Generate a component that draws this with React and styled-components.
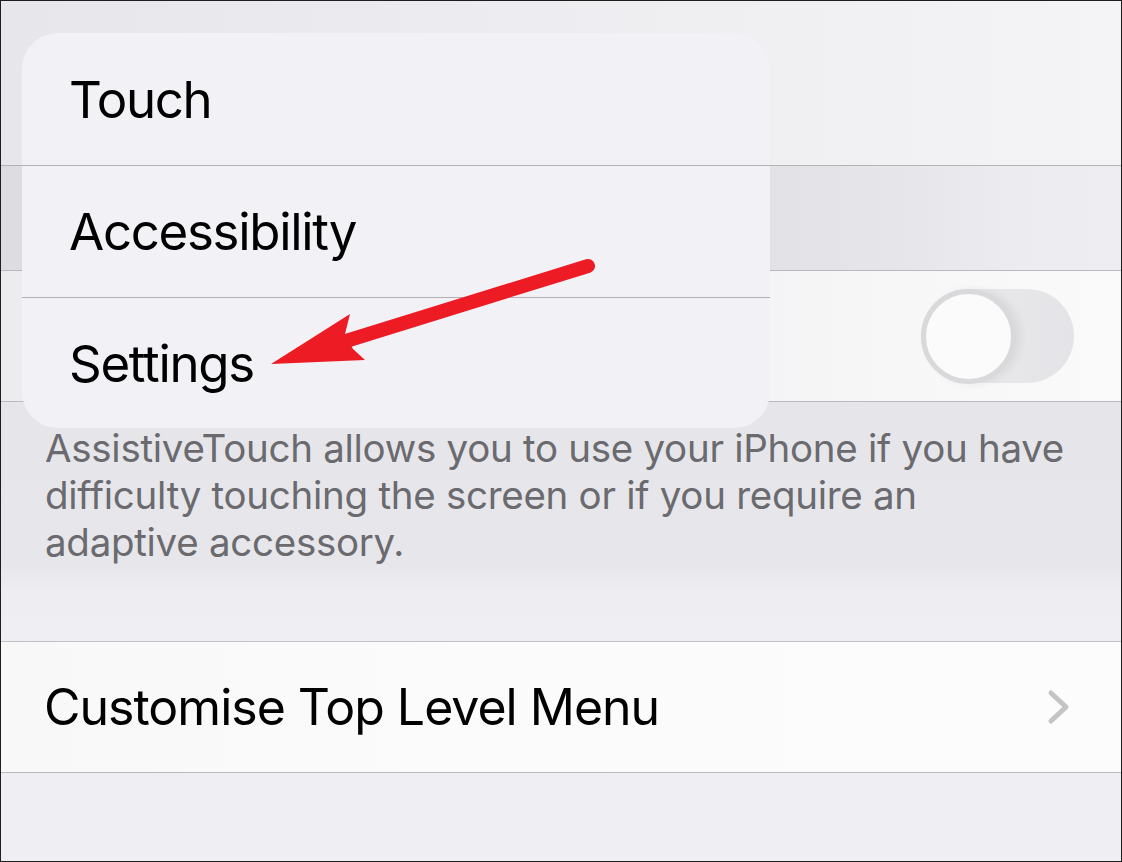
import React from 'react';
import styled, { createGlobalStyle } from 'styled-components';

const GlobalStyle = createGlobalStyle`
  html, body {
    margin: 0;
    padding: 0;
    background: #efeff3;
  }
  * {
    box-sizing: border-box;
  }
`;

const Screen = styled.div`
  position: relative;
  width: 1122px;
  height: 862px;
  overflow: hidden;
  border: 1px solid #1e1e1e;
  background: #efeff3;
  font-family: Inter, "Liberation Sans", Arial, sans-serif;
  display: flex;
  flex-direction: column;
`;

const TopArea = styled.div`
  height: 165px;
  flex-shrink: 0;
  border-bottom: 1px solid #b3b3b8;
  background: linear-gradient(90deg, #e7e7eb 0%, #ececf0 40%, #f0f0f3 70%, #f4f4f6 100%);
`;

const Row = styled.div`
  height: ${p => p.$height}px;
  flex-shrink: 0;
  display: flex;
  align-items: center;
  justify-content: space-between;
  padding: 0 47px 0 43px;
  border-bottom: 1px solid #b9b9be;
  background: ${p => p.$bg};
`;

const RowLabel = styled.span`
  font-size: 50px;
  line-height: 1;
  color: #000;
  letter-spacing: -1px;
`;

const Note = styled.div`
  height: 240px;
  flex-shrink: 0;
  padding: 23px 40px 0 44px;
  border-bottom: 1px solid #c3c3c7;
  background: linear-gradient(180deg, #e6e6ea 0%, #e7e7eb 68%, #eeeef2 80%, #efeff3 100%);
  font-size: 38.5px;
  line-height: 47px;
  color: #6a6a6f;
  letter-spacing: -0.28px;
  white-space: nowrap;
`;

const Bottom = styled.div`
  flex: 1;
  background: #efeff3;
`;

const Track = styled.div`
  width: 153px;
  height: 94px;
  border-radius: 47px;
  background: linear-gradient(90deg, #e9e9ec 0%, #e7e7ea 60%, #e4e4e8 100%);
  display: flex;
  align-items: center;
`;

const Knob = styled.div`
  width: 95px;
  height: 95px;
  border-radius: 50%;
  background: #fbfbfb;
  border: 5px solid #d9d9dc;
  box-shadow: 5px 0 8px rgba(0, 0, 0, 0.06);
`;

const Chevron = styled.svg`
  width: 24px;
  height: 36px;
  margin-right: 3px;
`;

const Menu = styled.div`
  position: absolute;
  left: 21px;
  top: 32px;
  width: 748px;
  border-radius: 36px;
  overflow: hidden;
  background: #f2f2f6;
  display: flex;
  flex-direction: column;
`;

const MenuItem = styled.div`
  height: ${p => p.$height}px;
  display: flex;
  align-items: center;
  padding-left: 47px;
  font-size: 51px;
  line-height: 1;
  color: #000;
  letter-spacing: -1.3px;
  border-top: ${p => (p.$first ? 'none' : '1px solid #b2b2b6')};
`;

const Arrow = styled.svg`
  position: absolute;
  left: 0;
  top: 0;
  width: 1122px;
  height: 862px;
  pointer-events: none;
`;

const menuItems = [
  { label: 'Touch', height: 132 },
  { label: 'Accessibility', height: 132 },
  { label: 'Settings', height: 131 },
];

export default function App() {
  return (
    <>
      <GlobalStyle />
      <Screen>
        <TopArea />
        <Row
          $height={105}
          $bg="linear-gradient(90deg, #dcdce1 0%, #dedee3 60%, #e2e2e7 70%, #e6e6ea 80%, #ececf0 90%, #eeeef2 100%)"
        />
        <Row
          $height={131}
          $bg="linear-gradient(90deg, #ececef 0%, #f2f2f4 60%, #f7f7f8 80%, #fafafa 100%)"
        >
          <span />
          <Track>
            <Knob />
          </Track>
        </Row>
        <Note>
          AssistiveTouch allows you to use your iPhone if you have
          <br />
          difficulty touching the screen or if you require an
          <br />
          adaptive accessory.
        </Note>
        <Row $height={131} $bg="linear-gradient(90deg, #f8f8f9 0%, #fbfbfb 40%, #fcfcfc 100%)">
          <RowLabel>Customise Top Level Menu</RowLabel>
          <Chevron viewBox="0 0 24 36">
            <path
              d="M4 4 L19 18 L4 32"
              fill="none"
              stroke="#c4c4c7"
              strokeWidth="5"
              strokeLinecap="round"
              strokeLinejoin="round"
            />
          </Chevron>
        </Row>
        <Bottom />

        <Menu>
          {menuItems.map((item, i) => (
            <MenuItem key={item.label} $height={item.height} $first={i === 0}>
              {item.label}
            </MenuItem>
          ))}
        </Menu>

        <Arrow viewBox="0 0 1122 862">
          <line
            x1="587"
            y1="265"
            x2="345"
            y2="340"
            stroke="#ed1c24"
            strokeWidth="14"
            strokeLinecap="round"
          />
          <polygon
            points="270,363 349,313 344,333 352,348 364,359"
            fill="#ed1c24"
          />
        </Arrow>
      </Screen>
    </>
  );
}
